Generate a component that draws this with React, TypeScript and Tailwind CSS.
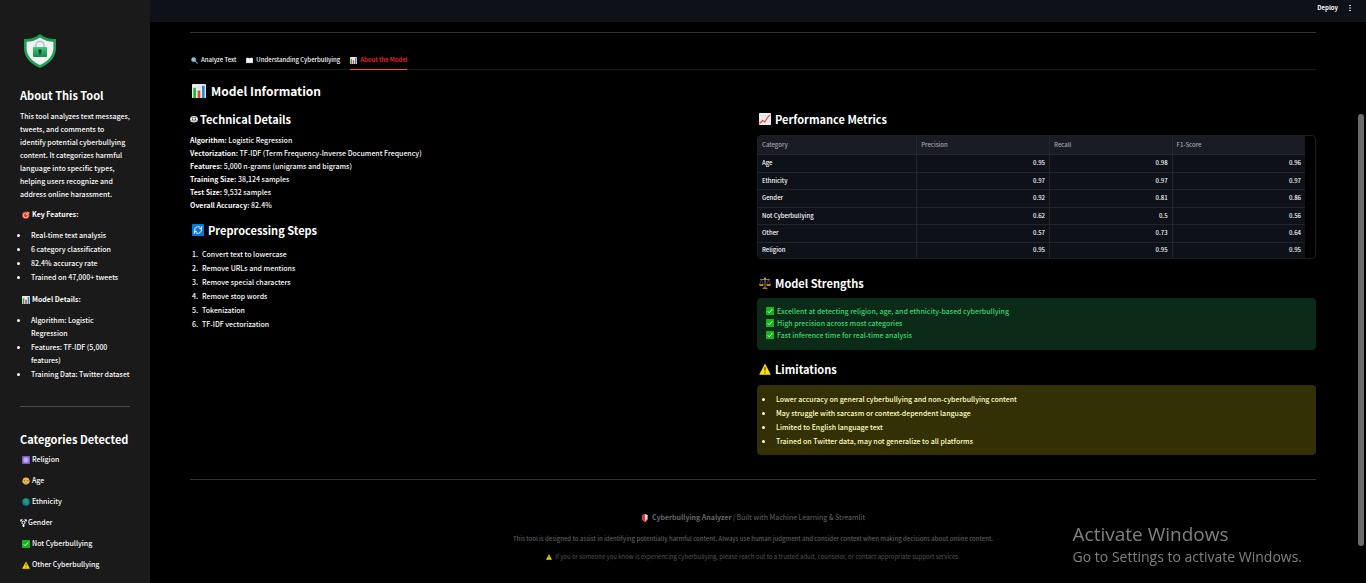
import React from "react";

type IconName =
  | "target" | "chart" | "atom" | "face" | "globe" | "gender" | "check" | "warning"
  | "search" | "book" | "robot" | "refresh" | "trend" | "scales" | "shield";

function Icon({ name, className }: { name: IconName; className: string }) {
  return (
    <svg viewBox="0 0 16 16" className={"shrink-0 " + className} aria-hidden="true">
      {shapes[name]}
    </svg>
  );
}

const shapes: Record<IconName, React.ReactNode> = {
  target: (
    <>
      <circle cx="7.5" cy="8.5" r="7.5" fill="#e03a2f" />
      <circle cx="7.5" cy="8.5" r="5.2" fill="#f5e9e6" />
      <circle cx="7.5" cy="8.5" r="3.8" fill="#e03a2f" />
      <path d="M7.5 8.5 13 3" stroke="#f0c090" strokeWidth="1.8" />
      <path d="m12 0 .5 2.600 3.500.6L13 6.500l-3-.5V3z" fill="#f59a36" />
    </>
  ),
  chart: (
    <>
      <rect width="16" height="16" rx="1" fill="#ececec" />
      <path d="M4 0v16M8 0v16M12 0v16M0 4h16M0 8h16M0 12h16" stroke="#d5d5d5" strokeWidth=".5" />
      <rect x="1.500" y="4.500" width="3" height="11.500" fill="#12b826" />
      <rect x="6.500" y="7.500" width="3" height="8.500" fill="#e8432c" />
      <rect x="11.500" y="2" width="3" height="14" fill="#2486dc" />
    </>
  ),
  atom: (
    <>
      <rect width="16" height="16" rx="1.500" fill="#7c5bd0" />
      <g fill="none" stroke="#e6dcff" strokeWidth="1.300">
        <ellipse cx="8" cy="8" rx="5.500" ry="2.600" transform="rotate(45 8 8)" />
        <ellipse cx="8" cy="8" rx="5.500" ry="2.600" transform="rotate(-45 8 8)" />
      </g>
      <circle cx="8" cy="8" r="1.300" fill="#fff" />
    </>
  ),
  face: (
    <>
      <circle cx="8" cy="8" r="6.800" fill="#f5b83d" />
      <circle cx="2" cy="9" r="1.800" fill="#e8a22e" />
      <circle cx="14" cy="9" r="1.800" fill="#e8a22e" />
      <path d="M6 1.500C7 0 10 0 10 2" stroke="#8a5a20" fill="none" />
      <circle cx="5.500" cy="7.500" r="1" fill="#3a2a18" />
      <circle cx="10.500" cy="7.500" r="1" fill="#3a2a18" />
      <ellipse cx="8" cy="13" rx="3" ry="2" fill="#5bb5d8" />
    </>
  ),
  globe: (
    <>
      <circle cx="8" cy="8" r="7.500" fill="#0b74d1" />
      <path d="M3 3c2-2 5-2.500 7-1.500L13 4l-1 2 1 2-2.500 5-2 1.500L7 10 3.500 8.500 2.500 6z" fill="#24a148" />
    </>
  ),
  gender: (
    <g fill="none" stroke="#fff" strokeWidth="2">
      <circle cx="7" cy="7.500" r="3" />
      <path d="M7 10.500V16M4.500 13.500h5M2 2l3 3.500M9 5.500 12 2M1.500 5V1.500H5M12.500 5V1.500H9" />
    </g>
  ),
  check: (
    <>
      <rect width="16" height="16" rx="1" fill="#13b71a" />
      <path d="m3.500 8.500 3 3 6-7" fill="none" stroke="#fff" strokeWidth="1.800" />
    </>
  ),
  warning: (
    <>
      <path d="M8 .8 15.800 15.500H.2z" fill="#ffe000" />
      <path d="M7.200 5.500h1.600L8.500 11h-1zM7.200 12.200h1.600v1.500H7.200z" fill="#2b2600" />
    </>
  ),
  search: (
    <>
      <path d="m9 9 6 6" stroke="#8b8f96" strokeWidth="2.600" />
      <circle cx="6" cy="6" r="4.800" fill="#7fc4ee" stroke="#9aa3ad" strokeWidth="1.600" />
    </>
  ),
  book: (
    <>
      <path d="M0 3h16v11H0z" fill="#9bb9d6" />
      <path d="M1 2.500c3-1 5.500-.5 7 .7 1.500-1.200 4-1.700 7-.7V13c-3-1-5.500-.5-7 .6C6.500 12.500 4 12 1 13z" fill="#fafafa" />
      <path d="M8 3.500v10" stroke="#b0b0b0" strokeWidth=".7" />
    </>
  ),
  robot: (
    <>
      <ellipse cx="8" cy="8.500" rx="7.800" ry="6.500" fill="#eaeaea" />
      <path d="M3.500 5h9M3 11.500h10" stroke="#222" strokeWidth="1" />
      <circle cx="5.300" cy="8.300" r="1.300" fill="#111" />
      <circle cx="10.700" cy="8.300" r="1.300" fill="#111" />
    </>
  ),
  refresh: (
    <>
      <rect width="16" height="16" rx="1" fill="#0a78d6" />
      <g fill="none" stroke="#fff" strokeWidth="1.300">
        <path d="M4.200 10.200A4.400 4.400 0 0 1 7 3.700M12 6a4.400 4.400 0 0 1-3 6.300M7.500 3.600c1.500-.2 2.800.3 3.600 1.200M8.500 12.400c-1.500.2-2.800-.3-3.600-1.200" />
        <path d="M12.800 3v3h-3M3.200 13v-3h3" />
      </g>
    </>
  ),
  trend: (
    <>
      <rect width="16" height="16" rx="1" fill="#f0f0f0" />
      <path d="M4 0v16M8 0v16M12 0v16M0 4h16M0 8h16M0 12h16" stroke="#d0d4d8" strokeWidth=".6" />
      <path d="m.8 14 4-4 3 2 3.500-6L15 2.500" fill="none" stroke="#e84a33" strokeWidth="1.500" />
    </>
  ),
  scales: (
    <>
      <path d="M8 1v13M1.500 3.200h13" stroke="#8c8c8c" strokeWidth="1.300" />
      <path d="M3.200 3.500 1 9.500M3.200 3.500l2.200 6M12.800 3.500l-2.200 6M12.800 3.500l2.200 6" stroke="#8a8a8a" strokeWidth=".6" />
      <path d="M0 9.500h6.400a3.200 2.500 0 0 1-6.400 0zM9.600 9.500H16a3.200 2.500 0 0 1-6.400 0zM4.500 15.800c.5-2.200 6.500-2.200 7 0z" fill="#e5a51c" />
      <circle cx="8" cy="2" r="1.400" fill="#e5a51c" />
    </>
  ),
  shield: (
    <>
      <path d="M8 0c2 1.500 4 2 6 2v5c0 4-2.500 7-6 9-3.500-2-6-5-6-9V2c2 0 4-.5 6-2z" fill="#f2e6e8" />
      <path d="M8 0v16c-3.500-2-6-5-6-9V2c2 0 4-.5 6-2zM14 2v5c0 4-2.500 7-6 9v-2c2.600-1.500 4.500-4 4.500-7V3z" fill="#e02d42" />
    </>
  ),
};

function Logo() {
  return (
    <svg viewBox="0 0 40 40" className="h-10 w-10" role="img" aria-label="Shield with a lock">
      <defs>
        <linearGradient id="rim" x1="0" y1="0" x2="0" y2="1">
          <stop offset="0" stopColor="#1c9a52" />
          <stop offset="1" stopColor="#23a45c" />
        </linearGradient>
        <linearGradient id="body" x1="0" y1="0" x2="0" y2="1">
          <stop offset="0" stopColor="#3ccb7f" />
          <stop offset="1" stopColor="#158a48" />
        </linearGradient>
      </defs>
      <path d="M20 3c4.500 3.800 10 5 16 5v9c0 9-6 15.500-16 20C10 32.500 4 26 4 17V8c6 0 11.500-1.200 16-5z" fill="url(#rim)" />
      <path d="M20 6.500c4 2.900 8.500 4.100 13.400 4.300V17c0 7.500-4.900 13-13.400 17C11.500 30 6.600 24.500 6.600 17v-6.200C11.500 10.600 16 9.400 20 6.500z" fill="#f1f3f2" />
      <path d="M15.800 17v-2.500a4.200 4.200 0 0 1 8.400 0V17" fill="none" stroke="#b5c6d4" strokeWidth="1.800" />
      <rect x="13" y="16" width="14" height="10" rx=".8" fill="url(#body)" />
      <path d="M13 19.500h14" stroke="#2fb26c" strokeWidth=".6" />
      <circle cx="20" cy="20" r="1.700" fill="#20332a" />
      <path d="M19.300 20.500h1.400v3h-1.400z" fill="#20332a" />
    </svg>
  );
}

function Bullets({ items, className = "" }: { items: string[]; className?: string }) {
  return (
    <ul className={"space-y-px " + className}>
      {items.map((item) => (
        <li key={item} className="flex leading-[13px]">
          <span className="mt-[5px] mr-[11px] h-[3px] w-[3px] shrink-0 rounded-full bg-current" />
          <span className="whitespace-pre">{item}</span>
        </li>
      ))}
    </ul>
  );
}

function SectionTitle({ icon, children, className = "" }: { icon: IconName; children: React.ReactNode; className?: string }) {
  return (
    <h3 className={"flex items-center gap-1 pl-0.5 text-[11px] leading-4 font-bold text-white " + className}>
      <Icon name={icon} className="h-3 w-3" />
      {children}
    </h3>
  );
}

const categories: [IconName, string][] = [
  ["atom", "Religion"],
  ["face", "Age"],
  ["globe", "Ethnicity"],
  ["gender", "Gender"],
  ["check", "Not Cyberbullying"],
  ["warning", "Other Cyberbullying"],
];

const details = [
  ["Algorithm:", "Logistic Regression"],
  ["Vectorization:", "TF-IDF (Term Frequency-Inverse Document Frequency)"],
  ["Features:", "5,000 n-grams (unigrams and bigrams)"],
  ["Training Size:", "38,124 samples"],
  ["Test Size:", "9,532 samples"],
  ["Overall Accuracy:", "82.4%"],
];

const steps = [
  "Convert text to lowercase",
  "Remove URLs and mentions",
  "Remove special characters",
  "Remove stop words",
  "Tokenization",
  "TF-IDF vectorization",
];

const metrics = [
  ["Age", "0.95", "0.98", "0.96"],
  ["Ethnicity", "0.97", "0.97", "0.97"],
  ["Gender", "0.92", "0.81", "0.86"],
  ["Not Cyberbullying", "0.62", "0.5", "0.56"],
  ["Other", "0.57", "0.73", "0.64"],
  ["Religion", "0.95", "0.95", "0.95"],
];

const strengths = [
  "Excellent at detecting religion, age, and ethnicity-based cyberbullying",
  "High precision across most categories",
  "Fast inference time for real-time analysis",
];

function Sidebar() {
  return (
    <aside className="w-[150px] shrink-0 bg-[#1a1a1a] px-5 pt-[31px] pb-2">
      <Logo />
      <h2 className="mt-4 text-[11px] leading-4 font-bold whitespace-nowrap text-white">About This Tool</h2>
      <p className="mt-[7px] leading-[13px] whitespace-nowrap">
        This tool analyzes text messages,
        <br />
        tweets, and comments to
        <br />
        identify potential cyberbullying
        <br />
        content. It categorizes harmful
        <br />
        language into specific types,
        <br />
        helping users recognize and
        <br />
        address online harassment.
      </p>
      <h3 className="mt-[7px] flex items-center gap-0.5 pl-0.5 leading-[13px] font-bold">
        <Icon name="target" className="h-2 w-2" />
        Key Features:
      </h3>
      <Bullets
        className="mt-2 -ml-[3px]"
        items={["Real-time text analysis", "6 category classification", "82.4% accuracy rate", "Trained on 47,000+ tweets"]}
      />
      <h3 className="mt-[9px] flex items-center gap-0.5 pl-0.5 leading-[13px] font-bold">
        <Icon name="chart" className="h-2 w-2" />
        Model Details:
      </h3>
      <Bullets
        className="mt-2 -ml-[3px]"
        items={["Algorithm: Logistic\nRegression", "Features: TF-IDF (5,000\nfeatures)", "Training Data: Twitter dataset"]}
      />
      <hr className="mt-[25px] border-[#4a4a4a]" />
      <h2 className="mt-6 text-[11px] leading-4 font-bold whitespace-nowrap text-white">Categories Detected</h2>
      <ul className="mt-1.5 space-y-2">
        {categories.map(([icon, label]) => (
          <li key={label} className={"flex items-center leading-[13px] " + (icon === "gender" ? "" : "gap-0.5 pl-0.5")}>
            <Icon name={icon} className="h-2 w-2" />
            {label}
          </li>
        ))}
      </ul>
    </aside>
  );
}

function MetricsTable() {
  return (
    <div className="mt-2 overflow-hidden rounded border border-[#1d1f23] pr-2.5">
      <table className="w-full table-fixed border-collapse text-[6px] leading-3">
        <thead>
          <tr className="h-[18px] bg-[#1a1c23] text-left text-[#a3a4a8]">
            <th className="w-[29%] border-r border-b border-[#25272c] px-1 py-0 font-medium">Category</th>
            <th className="w-[24.3%] border-r border-b border-[#25272c] px-1 py-0 font-medium">Precision</th>
            <th className="border-r border-b border-[#25272c] px-1 py-0 font-medium">Recall</th>
            <th className="w-[24.3%] border-b border-[#25272c] px-1 py-0 font-medium">F1-Score</th>
          </tr>
        </thead>
        <tbody className="bg-[#0e1117]">
          {metrics.map((row, i) => (
            <tr
              key={row[0]}
              className={i === metrics.length - 1 ? "h-4" : (i % 2 ? "h-[17px]" : "h-[18px]") + " border-b border-[#22252a]"}
            >
              {row.map((cell, j) => (
                <td
                  key={j}
                  className={"px-1 py-0 " + (j > 0 ? "text-right " : "") + (j < 3 ? "border-r border-[#22252a]" : "")}
                >
                  {cell}
                </td>
              ))}
            </tr>
          ))}
        </tbody>
      </table>
    </div>
  );
}

export default function App() {
  return (
    <div className="flex min-h-screen bg-black font-['Noto_Sans_CJK_SC',sans-serif] text-[7px] leading-[13px] font-medium text-[#fafafa]">
      <Sidebar />
      <div className="flex min-w-0 flex-1 flex-col">
        <header className="flex h-[22px] items-start justify-end gap-2.5 bg-[#0e1117] pt-px pr-3.5">
          <button type="button" className="text-[6px] leading-[13px] font-bold">Deploy</button>
          <button type="button" aria-label="Menu" className="pt-[3px]">
            <svg viewBox="0 0 4 8" className="h-2 w-1" fill="#d0d0d0">
              <path d="M1 1h2v1H1zM1 3.500h2v1H1zM1 6h2v1H1z" />
            </svg>
          </button>
        </header>
        <main className="pr-[50px] pl-10">
          <hr className="mt-2.5 border-[#333]" />
          <div role="tablist" className="mt-5 flex gap-2.5 border-b border-[#1c1c1c] text-[6px]">
            <button type="button" role="tab" className="flex h-4 items-center gap-[3px] pb-0.5 pl-px leading-3">
              <Icon name="search" className="h-[7px] w-[7px]" />
              Analyze Text
            </button>
            <button type="button" role="tab" className="flex h-4 items-center gap-[3px] pb-0.5 leading-3">
              <Icon name="book" className="h-[7px] w-[7px]" />
              Understanding Cyberbullying
            </button>
            <button
              type="button"
              role="tab"
              aria-selected="true"
              className="-mb-px flex h-[17px] items-center gap-[3px] border-b border-[#ff4b4b] pb-0.5 leading-3 text-[#ff2b2b]"
            >
              <Icon name="chart" className="h-[7px] w-[7px]" />
              About the Model
            </button>
          </div>
          <h2 className="mt-3 flex items-center gap-[5px] pl-0.5 text-[12px] leading-[18px] font-bold text-white">
            <Icon name="chart" className="h-3.5 w-3.5" />
            Model Information
          </h2>
          <div className="mt-[11px] grid grid-cols-2 gap-2">
            <section>
              <h3 className="flex items-center gap-0.5 text-[11px] leading-4 font-bold text-white">
                <Icon name="robot" className="h-2 w-2" />
                Technical Details
              </h3>
              <div className="mt-[7px]">
                {details.map(([label, value]) => (
                  <p key={label}>
                    <strong className="font-bold">{label}</strong> {value}
                  </p>
                ))}
              </div>
              <SectionTitle icon="refresh" className="mt-2.5">Preprocessing Steps</SectionTitle>
              <ol className="mt-2.5 space-y-px pl-0.5">
                {steps.map((step, i) => (
                  <li key={step} className="flex">
                    <span className="w-2.5">{i + 1}.</span>
                    {step}
                  </li>
                ))}
              </ol>
            </section>
            <section>
              <SectionTitle icon="trend">Performance Metrics</SectionTitle>
              <MetricsTable />
              <SectionTitle icon="scales" className="mt-4">Model Strengths</SectionTitle>
              <ul className="mt-[7px] rounded bg-[#0c2a18] px-[9px] pt-[7px] pb-[9px] leading-3 text-[#3dd56d]">
                {strengths.map((item) => (
                  <li key={item} className="flex items-center gap-[3px]">
                    <Icon name="check" className="h-2 w-2" />
                    {item}
                  </li>
                ))}
              </ul>
              <SectionTitle icon="warning" className="mt-[11px]">Limitations</SectionTitle>
              <div className="mt-2 rounded bg-[#333005] px-[5px] pt-2 pb-[7px] text-[#ffffc2]">
                <Bullets
                  items={[
                    "Lower accuracy on general cyberbullying and non-cyberbullying content",
                    "May struggle with sarcasm or context-dependent language",
                    "Limited to English language text",
                    "Trained on Twitter data, may not generalize to all platforms",
                  ]}
                />
              </div>
            </section>
          </div>
          <hr className="mt-6 border-[#333]" />
          <footer className="mt-[31px] flex flex-col items-center text-[#666]">
            <p className="flex items-center gap-[3px] font-normal">
              <Icon name="shield" className="h-2 w-2" />
              <span>
                <strong className="font-bold">Cyberbullying Analyzer</strong> | Built with Machine Learning &amp; Streamlit
              </span>
            </p>
            <p className="mt-2 text-[6px] text-[#5c5c5c]">
              This tool is designed to assist in identifying potentially harmful content. Always use human judgment and
              consider context when making decisions about online content.
            </p>
            <p className="mt-[5px] flex items-center gap-[3px] text-[6px] font-normal text-[#555]">
              <Icon name="warning" className="h-1.5 w-1.5" />
              If you or someone you know is experiencing cyberbullying, please reach out to a trusted adult, counselor,
              or contact appropriate support services.
            </p>
          </footer>
        </main>
      </div>
      <div className="fixed top-[114px] right-0.5 h-[432px] w-1.5 rounded-full bg-[#6b6b6b]" />
      <div className="pointer-events-none fixed right-16 bottom-[15px] font-['Open_Sans',sans-serif] font-normal text-[#808080]">
        <p className="text-[19px] leading-6">Activate Windows</p>
        <p className="text-[14px] leading-[22px]">Go to Settings to activate Windows.</p>
      </div>
    </div>
  );
}
